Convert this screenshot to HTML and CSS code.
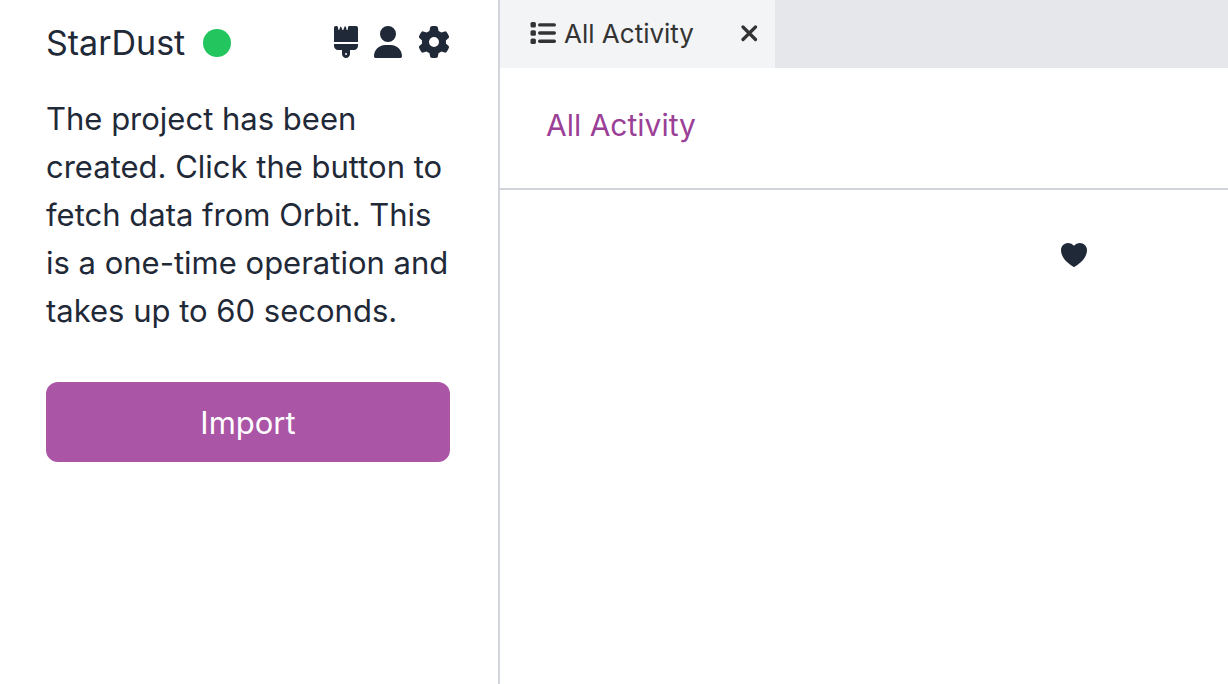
FILE: index.html
```html
<!DOCTYPE html>
<html lang="en">
<head>
<meta charset="utf-8">
<meta name="viewport" content="width=device-width, initial-scale=1">
<title>StarDust</title>
<link rel="stylesheet" href="styles.css">
</head>
<body>
<div class="app">
  <aside class="sidebar">
    <header class="sidebar-header">
      <div class="project">
        <h1 class="project-name">StarDust</h1>
        <span class="status-dot" role="img" aria-label="Connected"></span>
      </div>
      <nav class="sidebar-actions" aria-label="Project">
        <button class="icon-button" type="button" aria-label="Theme">
          <svg width="24" height="32" viewBox="0 0 384 512" fill="currentColor" aria-hidden="true"><path fill-rule="evenodd" d="M28 0H44Q56 0 60 12L72 60Q78 74 84 60L100 14Q108 0 116 14L134 60Q142 74 150 60L166 14Q174 0 184 8Q190 12 192 20L202 60Q210 74 218 60L226 12Q230 0 242 0H352C370 0 384 14 384 32V256H0V32C0 14 12 0 28 0ZM0 288H384V320C384 355 355 384 320 384H256V448C256 483 227 512 192 512S128 483 128 448V384H64C29 384 0 355 0 320ZM192 432A16 16 0 1 0 192 464A16 16 0 1 0 192 432Z"/></svg>
        </button>
        <button class="icon-button" type="button" aria-label="Account">
          <svg width="28" height="32" viewBox="0 0 448 512" fill="currentColor" aria-hidden="true"><path d="M224 256A128 128 0 1 0 224 0a128 128 0 1 0 0 256zm-45.700 48C79.800 304 0 383.800 0 482.300C0 498.700 13.300 512 29.700 512H418.300c16.400 0 29.700-13.300 29.700-29.700C448 383.800 368.200 304 269.700 304H178.300z"/></svg>
        </button>
        <button class="icon-button" type="button" aria-label="Settings">
          <svg width="32" height="32" viewBox="0 0 512 512" fill="currentColor" aria-hidden="true"><path d="M495.900 166.600c3.200 8.700 .5 18.400-6.400 24.600l-43.300 39.400c1.100 8.300 1.700 16.800 1.700 25.400s-.6 17.100-1.700 25.400l43.300 39.400c6.900 6.200 9.600 15.900 6.400 24.600c-4.400 11.900-9.700 23.300-15.800 34.300l-4.700 8.100c-6.600 11-14 21.400-22.100 31.200c-5.900 7.200-15.700 9.600-24.500 6.800l-55.700-17.700c-13.400 10.300-28.200 18.900-44 25.400l-12.500 57.100c-2 9.100-9 16.300-18.200 17.800c-13.800 2.300-28 3.500-42.500 3.500s-28.700-1.200-42.500-3.500c-9.200-1.500-16.200-8.700-18.200-17.800l-12.500-57.100c-15.800-6.500-30.600-15.100-44-25.400L83.100 425.900c-8.800 2.800-18.600 .3-24.500-6.800c-8.100-9.800-15.500-20.200-22.100-31.200l-4.700-8.100c-6.100-11-11.400-22.400-15.800-34.300c-3.200-8.700-.5-18.400 6.400-24.600l43.300-39.400C64.600 273.100 64 264.600 64 256s.6-17.100 1.700-25.400L22.400 191.200c-6.900-6.200-9.600-15.900-6.400-24.600c4.400-11.900 9.700-23.300 15.800-34.300l4.700-8.100c6.600-11 14-21.400 22.100-31.200c5.900-7.200 15.700-9.600 24.500-6.800l55.700 17.700c13.400-10.300 28.200-18.900 44-25.400l12.500-57.100c2-9.100 9-16.300 18.200-17.800C227.300 1.200 241.500 0 256 0s28.700 1.200 42.500 3.500c9.200 1.500 16.200 8.700 18.200 17.800l12.500 57.100c15.800 6.500 30.600 15.100 44 25.400l55.700-17.700c8.800-2.800 18.600-.3 24.500 6.800c8.100 9.800 15.500 20.200 22.100 31.200l4.700 8.100c6.100 11 11.400 22.400 15.800 34.300zM256 336a80 80 0 1 0 0-160 80 80 0 1 0 0 160z"/></svg>
        </button>
      </nav>
    </header>
    <p class="message">The project has been created. Click the button to fetch data from Orbit. This is a one-time operation and takes up to 60 seconds.</p>
    <button class="import-button" type="button">Import</button>
  </aside>
  <main class="workspace">
    <div class="tab-bar">
      <div class="tab">
        <button class="tab-select" type="button">
          <svg width="26" height="26" viewBox="0 0 26 26" fill="currentColor" aria-hidden="true"><rect x="0.500" y="1" width="5.400" height="5.400" rx="1.500"/><rect x="0.500" y="9.300" width="5.400" height="5.400" rx="1.500"/><rect x="0.500" y="17.500" width="5.400" height="5.400" rx="1.500"/><rect x="8" y="2.200" width="18" height="3.400" rx="1.700"/><rect x="8" y="10.300" width="18" height="3.400" rx="1.700"/><rect x="8" y="18.500" width="18" height="3.400" rx="1.700"/></svg>
          <span>All Activity</span>
        </button>
        <button class="tab-close" type="button" aria-label="Close tab">
          <svg width="18" height="18" viewBox="0 0 18 18" fill="none" stroke="currentColor" stroke-width="3.200" stroke-linecap="round" aria-hidden="true"><path d="M3 2L15.500 14.500M15.500 2L3 14.500"/></svg>
        </button>
      </div>
    </div>
    <header class="page-header">
      <a class="page-link" href="#activity">All Activity</a>
    </header>
    <section class="activity" id="activity" aria-label="All Activity">
      <svg width="26" height="24" viewBox="2.250 3 19.500 18" fill="currentColor" role="img" aria-label="Love"><path d="M11.645 20.910l-.007-.003-.022-.012a15.247 15.247 0 0 1-.383-.218 25.180 25.180 0 0 1-4.244-3.170C4.688 15.360 2.250 12.174 2.250 8.250 2.250 5.322 4.714 3 7.688 3A5.500 5.500 0 0 1 12 5.052 5.500 5.500 0 0 1 16.313 3c2.973 0 5.437 2.322 5.437 5.250 0 3.925-2.438 7.111-4.739 9.256a25.175 25.175 0 0 1-4.244 3.170 15.247 15.247 0 0 1-.383.219l-.022.012-.007.004-.003.001a.752.752 0 0 1-.704 0l-.003-.001Z"/></svg>
    </section>
  </main>
</div>
</body>
</html>
```
FILE: styles.css
```css
* {
  box-sizing: border-box;
}

body {
  margin: 0;
  background: #ffffff;
  color: #1f2937;
  font-family: Inter, "Liberation Sans", sans-serif;
  font-size: 31px;
  line-height: 48px;
}

button {
  margin: 0;
  padding: 0;
  border: 0;
  background: none;
  color: inherit;
  font: inherit;
  cursor: pointer;
}

svg {
  display: block;
  flex: none;
}

.app {
  display: flex;
  min-height: 100vh;
}

.sidebar {
  flex: 0 0 500px;
  padding: 17px 48px 48px 46px;
  border-right: 2px solid #d1d5db;
}

.sidebar-header {
  display: flex;
  align-items: center;
  justify-content: space-between;
  margin-bottom: 28px;
}

.project {
  display: flex;
  align-items: center;
  gap: 18px;
  padding-top: 2px;
}

.project-name {
  margin: 0;
  font-size: 34px;
  font-weight: 400;
  line-height: 48px;
}

.status-dot {
  width: 28px;
  height: 28px;
  border-radius: 50%;
  background: #22c55e;
}

.sidebar-actions {
  display: flex;
  gap: 16px;
}

.message {
  margin: 0 0 47px;
}

.import-button {
  width: 100%;
  padding: 17px 16px 15px;
  border-radius: 12px;
  background: #aa55a6;
  color: #ffffff;
}

.workspace {
  flex: 1;
  min-width: 0;
}

.tab-bar {
  display: flex;
  background: #e5e7eb;
}

.tab {
  display: flex;
  align-items: center;
  gap: 46px;
  padding: 10px 17px 10px 30px;
  background: #f3f4f6;
  color: #333333;
  font-size: 26px;
}

.tab-select {
  display: flex;
  align-items: center;
  gap: 8px;
}

.page-header {
  padding: 33px 46px 39px;
  border-bottom: 2px solid #d1d5db;
}

.page-link {
  color: #9b4097;
  font-size: 30px;
  text-decoration: none;
}

.activity {
  display: flex;
  justify-content: flex-end;
  padding: 53px 141px 48px;
}
```
